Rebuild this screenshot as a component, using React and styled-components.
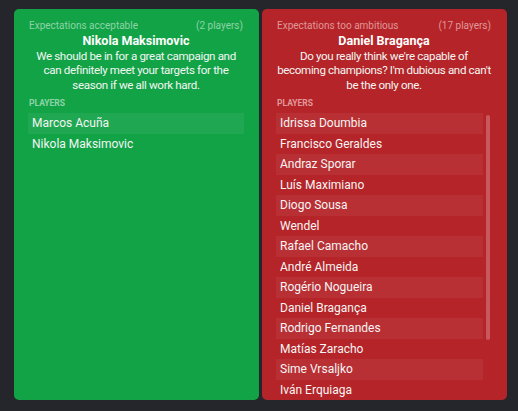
import React from 'react';
import styled, { createGlobalStyle } from 'styled-components';

const groups = [
    {
        tone: 'green',
        title: 'Expectations acceptable',
        count: 2,
        speaker: 'Nikola Maksimovic',
        quote: 'We should be in for a great campaign and can definitely meet your targets for the season if we all work hard.',
        players: ['Marcos Acuña', 'Nikola Maksimovic'],
    },
    {
        tone: 'red',
        title: 'Expectations too ambitious',
        count: 17,
        speaker: 'Daniel Bragança',
        quote: "Do you really think we're capable of becoming champions? I'm dubious and can't be the only one.",
        players: [
            'Idrissa Doumbia', 'Francisco Geraldes', 'Andraz Sporar', 'Luís Maximiano',
            'Diogo Sousa', 'Wendel', 'Rafael Camacho', 'André Almeida', 'Rogério Nogueira',
            'Daniel Bragança', 'Rodrigo Fernandes', 'Matías Zaracho', 'Sime Vrsaljko',
            'Iván Erquiaga',
        ],
    },
];

const tones = {
    green: { bg: '#12a347', muted: '#8ed3a6', thumb: '#3fb86b' },
    red: { bg: '#b52428', muted: '#e0989a', thumb: '#c8585b' },
};

function App() {
    return (
        <>
            <GlobalStyle />
            <Page>
                {groups.map((g) => {
                    const scrolls = g.count > 14;
                    return (
                        <Panel key={g.title} $tone={g.tone}>
                            <Header $tone={g.tone}>
                                <span>{g.title}</span>
                                <span>({g.count} players)</span>
                            </Header>
                            <Speaker>{g.speaker}</Speaker>
                            <Quote>{g.quote}</Quote>
                            <Label $tone={g.tone}>Players</Label>
                            <List $scroll={scrolls}>
                                {g.players.map((p) => (
                                    <Row key={p}>{p}</Row>
                                ))}
                                {scrolls && <Thumb $tone={g.tone} />}
                            </List>
                        </Panel>
                    );
                })}
            </Page>
        </>
    );
}

export default App;

const GlobalStyle = createGlobalStyle`
    html, body {
        margin: 0;
        background: #25262b;
    }
    body {
        font-family: Roboto, "Liberation Sans", sans-serif;
    }
`;

const Page = styled.div`
    display: flex;
    gap: 3px;
    height: 411px;
    box-sizing: border-box;
    padding: 9px 11px 11px 14px;
`;

const Panel = styled.div`
    flex: 1;
    min-width: 0;
    display: flex;
    flex-direction: column;
    background: ${(p) => tones[p.$tone].bg};
    border-radius: 5px;
    overflow: hidden;
    padding: 10px 15px 0 14px;
    color: #fff;
`;

const Header = styled.div`
    display: flex;
    justify-content: space-between;
    font-size: 10px;
    line-height: 13px;
    color: ${(p) => tones[p.$tone].muted};
    padding: 0 1px;
`;

const Speaker = styled.div`
    margin-top: 2px;
    text-align: center;
    font-weight: 700;
    font-size: 12.5px;
    line-height: 14.5px;
`;

const Quote = styled.div`
    text-align: center;
    font-size: 11.6px;
    letter-spacing: -0.35px;
    line-height: 14.5px;
    color: #f2f6f3;
`;

const Label = styled.div`
    margin-top: 6px;
    font-size: 8.5px;
    line-height: 10px;
    font-weight: 700;
    text-transform: uppercase;
    color: ${(p) => tones[p.$tone].muted};
    padding-left: 1px;
`;

const List = styled.div`
    position: relative;
    margin-top: 5px;
    flex: 1;
    min-height: 0;
    overflow: hidden;
    padding-right: ${(p) => (p.$scroll ? '9px' : '0')};
`;

const Thumb = styled.div`
    position: absolute;
    top: 2px;
    right: 2px;
    width: 4px;
    height: 225px;
    border-radius: 2px;
    background: ${(p) => tones[p.$tone].thumb};
`;

const Row = styled.div`
    height: 20.5px;
    line-height: 20.5px;
    padding-left: 4px;
    font-size: 12px;
    color: #f4f4f4;
    white-space: nowrap;

    &:nth-child(odd) {
        background: rgba(255, 255, 255, 0.06);
    }
`;
